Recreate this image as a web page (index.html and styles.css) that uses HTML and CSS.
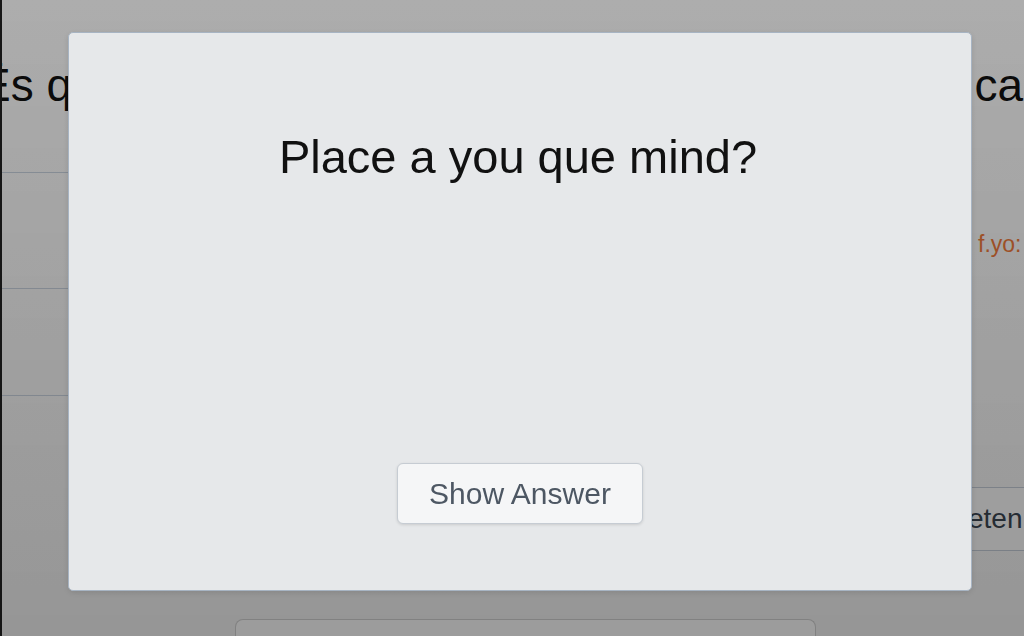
FILE: index.html
```html
<!DOCTYPE html>
<html lang="en">
<head>
  <meta charset="UTF-8">
  <meta name="viewport" content="width=device-width, initial-scale=1.0">
  <title>Flashcards</title>
  <link rel="stylesheet" href="styles.css">
</head>
<body>
  <div class="page">
    <div class="page-head">
      <span class="head-left">Ēs qu</span>
      <span class="head-right">cac</span>
    </div>
    <div class="page-body">
      <div class="list">
        <div class="list-row row-tall"></div>
        <div class="list-row row-mid"></div>
        <div class="list-row"></div>
      </div>
      <div class="side">
        <span class="hint">f.yo:</span>
        <div class="field">eten</div>
      </div>
    </div>
    <div class="page-foot">
      <div class="foot-box"></div>
    </div>
  </div>

  <div class="overlay">
    <div class="modal">
      <h2 class="question">Place a you que mind?</h2>
      <button class="show-btn">Show Answer</button>
    </div>
  </div>
</body>
</html>
```

FILE: styles.css
```css
html, body {
    margin: 0;
    height: 100%;
    overflow: hidden;
}

body {
    font-family: "Liberation Sans", Arial, sans-serif;
    background: linear-gradient(180deg, #ffffff, #f2f2f2);
    color: #111;
    border-left: 2px solid #222;
    box-sizing: border-box;
}

/* page behind the modal */
.page {
    height: 100%;
    display: flex;
    flex-direction: column;
}

.page-head {
    display: flex;
    justify-content: space-between;
    height: 172px;
    padding-top: 62px;
    box-sizing: border-box;
    font-size: 46px;
    line-height: 1;
    white-space: nowrap;
    overflow: hidden;
}

.head-left {
    margin-left: -22px;
}

.head-right {
    margin-right: -22px;
}

.page-body {
    display: flex;
    justify-content: space-between;
}

.list {
    width: 120px;
    display: flex;
    flex-direction: column;
}

.list-row {
    border-top: 1.5px solid #c9d3df;
}

.row-tall {
    height: 115px;
}

.row-mid {
    height: 106px;
}

.side {
    width: 52px;
    display: flex;
    flex-direction: column;
    overflow: hidden;
}

.hint {
    color: #f07a3c;
    font-size: 23px;
    line-height: 26px;
    margin-top: 59px;
    white-space: nowrap;
    margin-left: 6px;
}

.field {
    margin-top: 230px;
    height: 62px;
    border-top: 1.5px solid #c3cbd6;
    border-bottom: 1.5px solid #c3cbd6;
    background: #fbfbfb;
    font-size: 28px;
    line-height: 62px;
    color: #3c4652;
    text-indent: -4px;
    white-space: nowrap;
}

.page-foot {
    margin-top: auto;
    display: flex;
    justify-content: center;
}

.foot-box {
    width: 579px;
    height: 16px;
    margin-left: 25px;
    border: 1.5px solid #d0d0d0;
    border-bottom: none;
    border-radius: 8px 8px 0 0;
    background: #fcfcfc;
}

/* modal */
.overlay {
    position: fixed;
    inset: 0;
    background: linear-gradient(180deg, rgba(0, 0, 0, 0.32), rgba(0, 0, 0, 0.38));
    display: flex;
    justify-content: center;
    padding-top: 32px;
}

.modal {
    width: 904px;
    height: 559px;
    box-sizing: border-box;
    margin-left: 16px;
    background: #e6e8ea;
    border: 1px solid #a7b4c3;
    border-radius: 5px;
    box-shadow: 0 2px 6px rgba(0, 0, 0, 0.12);
    display: flex;
    flex-direction: column;
    align-items: center;
    justify-content: space-between;
    padding: 100px 0 66px;
}

.question {
    margin: 0;
    font-size: 47px;
    font-weight: normal;
    line-height: 1;
    color: #111;
    margin-left: -4px;
}

.show-btn {
    width: 246px;
    height: 61px;
    font-family: "Liberation Sans", Arial, sans-serif;
    font-size: 30px;
    color: #4d5763;
    background: #f5f6f7;
    border: 1px solid #c6ccd3;
    border-radius: 6px;
    box-shadow: 0 1px 3px rgba(0, 0, 0, 0.12);
    cursor: pointer;
}
```
